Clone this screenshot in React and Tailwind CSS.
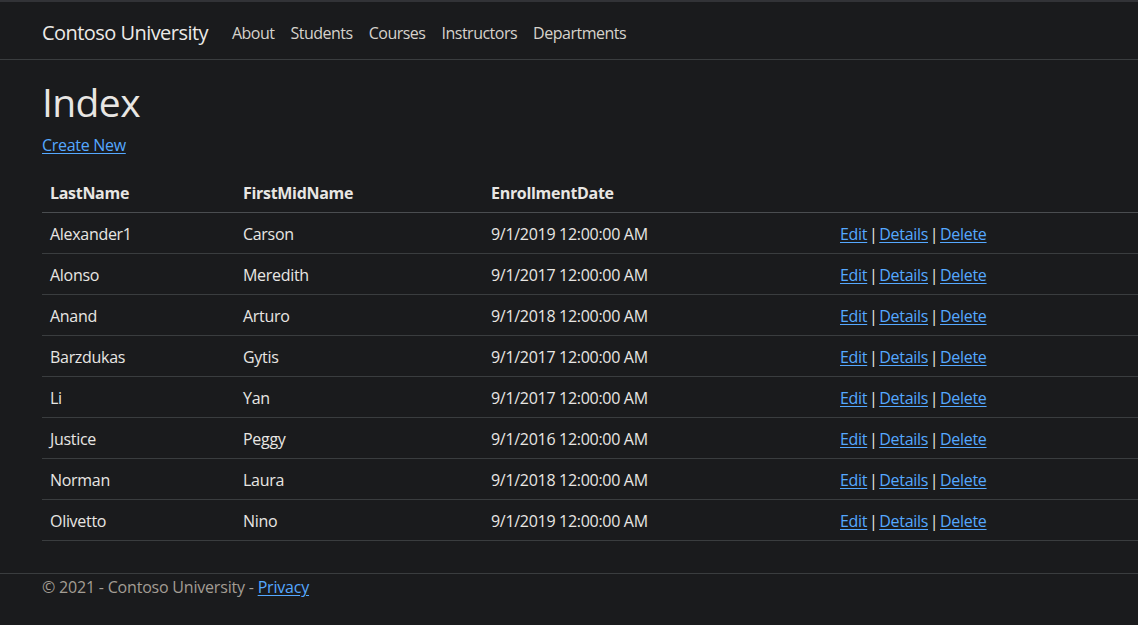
import React from "react";

const rows = [
  ["Alexander1", "Carson", "9/1/2019 12:00:00 AM"],
  ["Alonso", "Meredith", "9/1/2017 12:00:00 AM"],
  ["Anand", "Arturo", "9/1/2018 12:00:00 AM"],
  ["Barzdukas", "Gytis", "9/1/2017 12:00:00 AM"],
  ["Li", "Yan", "9/1/2017 12:00:00 AM"],
  ["Justice", "Peggy", "9/1/2016 12:00:00 AM"],
  ["Norman", "Laura", "9/1/2018 12:00:00 AM"],
  ["Olivetto", "Nino", "9/1/2019 12:00:00 AM"],
];

const link = "text-[#55a8ff] underline underline-offset-2";

const Pipe = () => <span className="inline-block w-[12px] text-center">|</span>;

export default function App() {
  return (
    <div
      className="min-h-[625px] bg-[#1a1b1d] text-[#e8e6e3] text-[16px] leading-6 tracking-[-0.3px] overflow-hidden"
      style={{ fontFamily: '"Open Sans", "Noto Sans", sans-serif' }}
    >
      <div className="h-[2px] bg-[#323337]" />
      <nav className="h-[58px] border-b border-[#3a3d3f] flex items-center pl-[42px] pt-[4px]">
        <span className="text-[20px] leading-[30px] tracking-[-0.55px] text-[#eceae7] mr-4">Contoso University</span>
        <div className="flex">
          {["About", "Students", "Courses", "Instructors", "Departments"].map((n) => (
            <span key={n} className="px-2 text-[#d6d2cc] tracking-[-0.5px]">{n}</span>
          ))}
        </div>
      </nav>
      <main className="pl-[42px] pt-4 pb-4">
        <h1 className="text-[39px] leading-[48px] font-normal pt-[2px] mb-[6px] text-[#e8e6e3] tracking-[-0.6px]">Index</h1>
        <p className="pt-px mb-[15px]">
          <a className={link}>Create New</a>
        </p>
        <table className="w-[1096px] border-collapse mb-4">
          <thead>
            <tr className="border-b border-[#4a4d50]">
              <th className="w-[193px] pt-[9px] pb-[7px] px-2 text-left font-bold">LastName</th>
              <th className="w-[248px] pt-[9px] pb-[7px] px-2 text-left font-bold">FirstMidName</th>
              <th className="w-[349px] pt-[9px] pb-[7px] px-2 text-left font-bold">EnrollmentDate</th>
              <th className="pt-[9px] pb-[7px] px-2" />
            </tr>
          </thead>
          <tbody>
            {rows.map((r) => (
              <tr key={r[0]} className="border-b border-[#3a3d3f]">
                <td className="pt-[9px] pb-[7px] px-2">{r[0]}</td>
                <td className="pt-[9px] pb-[7px] px-2">{r[1]}</td>
                <td className="pt-[9px] pb-[7px] px-2">{r[2]}</td>
                <td className="pt-[9px] pb-[7px] px-2">
                  <a className={link}>Edit</a>
                  <Pipe />
                  <a className={link}>Details</a>
                  <Pipe />
                  <a className={link}>Delete</a>
                </td>
              </tr>
            ))}
          </tbody>
        </table>
      </main>
      <footer className="border-t border-[#3a3d3f] pl-[42px] pt-px text-[#a39d94] tracking-[-0.2px]">
        © 2021 - Contoso University - <a className={link}>Privacy</a>
      </footer>
    </div>
  );
}
